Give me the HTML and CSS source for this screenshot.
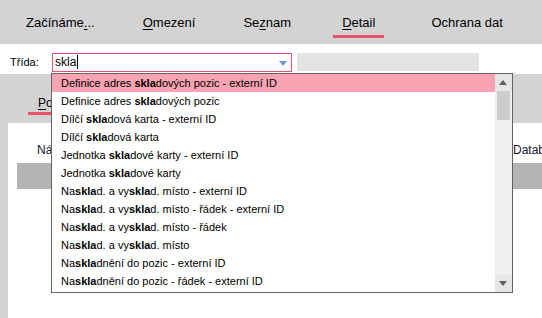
FILE: index.html
```html
<!DOCTYPE html>
<html lang="cs">
<head>
    <meta charset="UTF-8">
    <title>Detail</title>
    <link rel="stylesheet" href="styles.css">
</head>
<body>

    <nav class="tabs">
        <span class="tab">Začínáme<u>.</u>..</span>
        <span class="tab"><u>O</u>mezení</span>
        <span class="tab">Se<u>z</u>nam</span>
        <span class="tab active"><u>D</u>etail</span>
        <span class="tab last">Ochrana dat</span>
    </nav>

    <div class="filter">
        <label for="trida">Třída:</label>
        <div class="combo">
            <span class="combo-text">skla</span><span class="caret"></span>
            <span class="combo-arrow"></span>
        </div>
        <div class="field"></div>
    </div>

    <div class="workspace">
        <div class="subtabs">
            <span class="subtab"><u>P</u>oložky</span>
        </div>
        <div class="panel">
            <div class="cols">
                <span>Název</span>
                <span>Databáze</span>
            </div>
            <div class="bar"></div>
        </div>
    </div>

    <!-- nabídka našeptávače -->
    <div class="dropdown">
        <ul class="list">
            <li class="selected">Definice adres <b>skla</b>dových pozic - externí ID</li>
            <li>Definice adres <b>skla</b>dových pozic</li>
            <li>Dílčí <b>skla</b>dová karta - externí ID</li>
            <li>Dílčí <b>skla</b>dová karta</li>
            <li>Jednotka <b>skla</b>dové karty - externí ID</li>
            <li>Jednotka <b>skla</b>dové karty</li>
            <li>Na<b>skla</b>d. a vy<b>skla</b>d. místo - externí ID</li>
            <li>Na<b>skla</b>d. a vy<b>skla</b>d. místo - řádek - externí ID</li>
            <li>Na<b>skla</b>d. a vy<b>skla</b>d. místo - řádek</li>
            <li>Na<b>skla</b>d. a vy<b>skla</b>d. místo</li>
            <li>Na<b>skla</b>dnění do pozic - externí ID</li>
            <li>Na<b>skla</b>dnění do pozic - řádek - externí ID</li>
        </ul>
        <div class="scrollbar">
            <span class="sb-btn up"></span>
            <span class="sb-track"><span class="sb-thumb"></span></span>
            <span class="sb-btn down"></span>
        </div>
    </div>

</body>
</html>
```

FILE: styles.css
```css
body {
    margin: 0;
    height: 318px;
    overflow: hidden;
    display: flex;
    flex-direction: column;
    font-family: "Liberation Sans", Arial, sans-serif;
    font-size: 11px;
    color: #000;
    background-color: #d3d3d3;
    position: relative;
}

u {
    text-decoration: underline;
    text-underline-offset: 2px;
}

/* horni zalozky */
.tabs {
    height: 44px;
    flex: none;
    display: flex;
    gap: 30px;
    padding-left: 17px;
}

.tab {
    font-size: 13px;
    line-height: 15px;
    padding: 15px 9px 5px;
    border-bottom: 3px solid transparent;
    align-self: flex-start;
}

.tab.active {
    margin-left: 3px;
    border-bottom-color: #e8506e;
}

.tab.last {
    margin-left: 8px;
}

/* radek s filtrem */
.filter {
    height: 30px;
    flex: none;
    box-sizing: border-box;
    display: flex;
    align-items: flex-start;
    padding: 9px 0 0 10px;
    background-color: #fff;
}

.filter label {
    width: 42px;
    line-height: 19px;
}

.combo {
    position: relative;
    width: 240px;
    height: 19px;
    box-sizing: border-box;
    border: 1px solid #e4506f;
    padding-left: 2px;
    line-height: 17px;
    font-size: 12px;
}

.caret {
    display: inline-block;
    width: 1px;
    height: 14px;
    margin-left: 1px;
    vertical-align: -3px;
    background-color: #000;
}

.combo-arrow {
    position: absolute;
    right: 4px;
    top: 7px;
    border-left: 4px solid transparent;
    border-right: 4px solid transparent;
    border-top: 5px solid #6a9ad8;
}

.field {
    width: 182px;
    height: 18px;
    margin-left: 5px;
    background-color: #e3e3e3;
}

/* spodni cast */
.workspace {
    flex: 1;
    display: flex;
    flex-direction: column;
    padding-left: 8px;
}

.subtabs {
    height: 49px;
    flex: none;
    padding-left: 20px;
}

.subtab {
    display: inline-block;
    font-size: 12px;
    line-height: 14px;
    padding: 22px 10px 2px;
    border-bottom: 3px solid #e8506e;
}

.panel {
    flex: 1;
    background-color: #fff;
}

.cols {
    display: grid;
    grid-template-columns: 476px auto;
    padding: 20px 0 0 29px;
    font-size: 12px;
    line-height: 14px;
    color: #141432;
    white-space: nowrap;
}

.bar {
    height: 26px;
    margin: 6px 0 0 9px;
    background-color: #b4b4b4;
}

/* nabidka */
.dropdown {
    position: absolute;
    left: 51px;
    top: 73px;
    width: 462px;
    height: 220px;
    box-sizing: border-box;
    border: 1px solid #646464;
    background-color: #fff;
    display: flex;
}

.list {
    flex: 1;
    margin: 0;
    padding: 0;
    list-style: none;
}

.list li {
    height: 18px;
    line-height: 18px;
    padding-left: 9px;
    white-space: nowrap;
}

.list li.selected {
    background-color: #f7a3b1;
}

.scrollbar {
    width: 17px;
    display: flex;
    flex-direction: column;
    background-color: #f0f0f0;
}

.sb-btn {
    height: 17px;
    flex: none;
    position: relative;
    background-color: #e6e6e6;
}

.sb-btn::after {
    content: "";
    position: absolute;
    left: 4px;
    top: 6px;
    border-left: 4px solid transparent;
    border-right: 4px solid transparent;
}

.sb-btn.up::after {
    border-bottom: 5px solid #606060;
}

.sb-btn.down::after {
    border-top: 5px solid #606060;
}

.sb-track {
    flex: 1;
    padding: 0 2px;
}

.sb-thumb {
    display: block;
    height: 29px;
    background-color: #cdcdcd;
}
```
